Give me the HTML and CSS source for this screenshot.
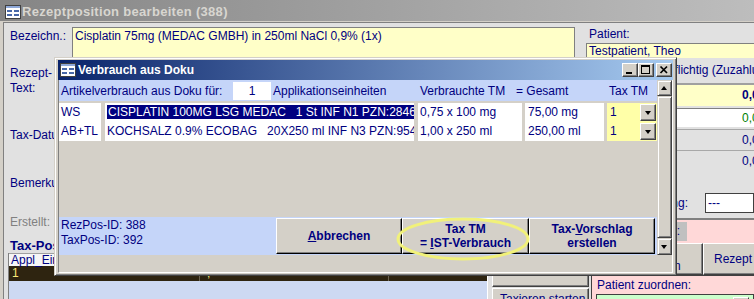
FILE: index.html
```html
<!DOCTYPE html>
<html lang="de">
<head>
    <meta charset="UTF-8">
    <title>Rezeptposition bearbeiten</title>
    <link rel="stylesheet" href="styles.css">
</head>
<body>
<div class="screen">

    <!-- Hauptformular (inaktiv im Hintergrund) -->
    <div class="win">
        <div class="win-title">
            <svg class="form-icon" width="16" height="14" viewBox="0 0 16 14">
                <rect x="0.5" y="0.5" width="15" height="13" fill="#fff" stroke="#404040"/>
                <rect x="1" y="1" width="14" height="2" fill="#8ea8d8"/>
                <rect x="2" y="5" width="5" height="2" fill="#4868a8"/>
                <rect x="9" y="5" width="5" height="2" fill="#4868a8"/>
                <rect x="2" y="9" width="5" height="2" fill="#4868a8"/>
                <rect x="9" y="9" width="5" height="2" fill="#4868a8"/>
            </svg>
            <span>Rezeptposition bearbeiten (388)</span>
        </div>

        <div class="win-body">
            <div class="band-top">
                <div class="lbl bez-lbl">Bezeichn.:</div>
                <div class="field bez-field">Cisplatin 75mg (MEDAC GMBH) in 250ml NaCl 0,9% (1x)</div>
                <div class="patient">
                    <div class="lbl">Patient:</div>
                    <div class="field pat-field">Testpatient, Theo</div>
                </div>
            </div>

            <div class="band-main">
                <div class="main-left">
                    <div class="lbl l-rezept">Rezept-<br>Text:</div>
                    <div class="lbl l-taxdat">Tax-Datum:</div>
                    <div class="lbl l-bemerk">Bemerkung:</div>
                    <div class="lbl l-erstellt">Erstellt:</div>
                    <div class="taxpos-title">Tax-Positionen</div>
                    <div class="tax-grid">
                        <div class="grid-head">Appl_Einheit</div>
                        <div class="grid-row">
                            <span class="gc gc-1">1</span>
                            <span class="gc gc-2">-,-- -</span>
                            <span class="gc gc-3"></span>
                        </div>
                    </div>
                </div>

                <div class="main-right">
                    <div class="side">
                        <div class="zz">zuzahlungspflichtig (Zuzahlung)</div>
                        <div class="sum">0,00</div>
                        <div class="eigen">0,00</div>
                        <div class="amounts">
                            <div class="amt">0,00</div>
                            <div class="amt">0,00</div>
                            <div class="abr">
                                <div class="lbl">Abrechnung:</div>
                                <div class="abr-field">---</div>
                            </div>
                        </div>
                        <div class="status">
                            <div class="status-box">Status:</div>
                        </div>
                        <div class="side-btns">
                            <div class="btn btn-take">Taxierung<br>übernehmen</div>
                            <div class="btn btn-print">Rezept drucken</div>
                        </div>
                    </div>
                    <div class="lower">
                        <div class="btn-col">
                            <div class="btn btn-stub"></div>
                            <div class="btn btn-start">Taxieren starten</div>
                        </div>
                        <div class="assign">
                            <div class="lbl">Patient zuordnen:</div>
                            <div class="assign-field">
                                <span class="mini-btn"></span>
                            </div>
                        </div>
                    </div>
                </div>
            </div>
        </div>
    </div>

    <!-- Dialog Verbrauch aus Doku -->
    <div class="dialog">
        <div class="dlg-title">
            <svg class="form-icon" width="16" height="14" viewBox="0 0 16 14">
                <rect x="0.5" y="0.5" width="15" height="13" fill="#fff" stroke="#404040"/>
                <rect x="1" y="1" width="14" height="2" fill="#8ea8d8"/>
                <rect x="2" y="5" width="5" height="2" fill="#4868a8"/>
                <rect x="9" y="5" width="5" height="2" fill="#4868a8"/>
                <rect x="2" y="9" width="5" height="2" fill="#4868a8"/>
                <rect x="9" y="9" width="5" height="2" fill="#4868a8"/>
            </svg>
            <span class="dlg-caption">Verbrauch aus Doku</span>
            <div class="cap-btns">
                <span class="cbtn">
                    <svg width="14" height="12" viewBox="0 0 14 12"><rect x="3" y="8" width="6" height="2" fill="#000"/></svg>
                </span>
                <span class="cbtn">
                    <svg width="14" height="12" viewBox="0 0 14 12"><rect x="2.5" y="1.5" width="8" height="8" fill="none" stroke="#000"/><rect x="2" y="1" width="9" height="2" fill="#000"/></svg>
                </span>
                <span class="cbtn cbtn-close">
                    <svg width="14" height="12" viewBox="0 0 14 12"><path d="M3.5 2.5 L10 9 M10 2.5 L3.5 9" stroke="#000" stroke-width="1.7"/></svg>
                </span>
            </div>
        </div>

        <div class="dlg-client">
            <div class="dlg-main">
                <div class="dlg-form">
                    <div class="hdr">
                        <span class="h-lbl">Artikelverbrauch aus Doku für:</span>
                        <span class="h-input">1</span>
                        <span class="h-appl">Applikationseinheiten</span>
                        <span class="h-verb">Verbrauchte TM</span>
                        <span class="h-ges">= Gesamt</span>
                        <span>Tax TM</span>
                    </div>

                    <div class="rows">
                        <div class="row">
                            <div class="cell c1">WS</div>
                            <div class="cell c2"><span class="sel">CISPLATIN 100MG LSG MEDAC   1 St INF N1 PZN:2846597</span></div>
                            <div class="cell c3">0,75 x 100 mg</div>
                            <div class="cell c4">75,00 mg</div>
                            <div class="cell c5">1<span class="drop"></span></div>
                        </div>
                        <div class="row">
                            <div class="cell c1">AB+TL</div>
                            <div class="cell c2">KOCHSALZ 0.9% ECOBAG   20X250 ml INF N3 PZN:9544137</div>
                            <div class="cell c3">1,00 x 250 ml</div>
                            <div class="cell c4">250,00 ml</div>
                            <div class="cell c5">1<span class="drop"></span></div>
                        </div>
                    </div>

                    <div class="empty"></div>

                    <div class="footer">
                        <div class="ids">RezPos-ID: 388<br>TaxPos-ID: 392</div>
                        <div class="dbtn dbtn-cancel"><span><u>A</u>bbrechen</span></div>
                        <div class="dbtn dbtn-ist"><span>Tax TM<br>= <u>I</u>ST-Verbrauch</span></div>
                        <div class="dbtn dbtn-vor"><span>Tax-<u>V</u>orschlag<br>erstellen</span></div>
                    </div>
                </div>

                <div class="vscroll">
                    <span class="sbtn sbtn-up"></span>
                    <span class="thumb"></span>
                    <span class="sbtn sbtn-down"></span>
                </div>
            </div>
        </div>
    </div>

    <!-- Markierung -->
    <svg class="mark" width="136" height="46" viewBox="0 0 136 46">
        <ellipse cx="68" cy="23" rx="65" ry="20" fill="none" stroke="#f1f17a" stroke-width="3"/>
    </svg>

</div>
</body>
</html>
```

FILE: styles.css
```css
* {
  box-sizing: border-box;
}

html,
body {
  margin: 0;
  height: 100%;
  overflow: hidden;
}

body {
  font-family: "Liberation Sans", Arial, sans-serif;
  font-size: 12px;
  color: #000080;
  background: #d4d0c8;
}

.screen {
  position: relative;
  width: 754px;
  height: 299px;
  overflow: hidden;
}

.form-icon {
  flex: none;
  display: block;
}

/* ---------- Hintergrundfenster ---------- */

.win {
  height: 100%;
  display: flex;
  flex-direction: column;
  background: #d4d0c8;
}

.win-title {
  height: 21px;
  flex: none;
  display: flex;
  align-items: center;
  gap: 1px;
  padding: 2px 0 0 5px;
  background: linear-gradient(to right, #858585, #bdbdbd);
  color: #d8d6d0;
  font-size: 13px;
  font-weight: bold;
  letter-spacing: 0.3px;
}

.win-body {
  flex: 1;
  min-height: 0;
  display: flex;
  flex-direction: column;
  margin: 1px 0 0 3px;
  border-top: 1px solid #808080;
  border-left: 1px solid #808080;
  background: #e1e1e1;
}

.lbl {
  line-height: 15px;
  white-space: nowrap;
}

.field {
  background: #ffffc8;
  border: 1px solid #808080;
  white-space: nowrap;
  overflow: hidden;
  line-height: 15px;
}

.band-top {
  height: 35px;
  flex: none;
  display: flex;
}

.bez-lbl {
  width: 68px;
  padding: 6px 0 0 6px;
}

.bez-field {
  width: 503px;
  height: 31px;
  margin-top: 4px;
  padding: 1px 2px;
}

.patient {
  flex: 1;
  margin-left: 8px;
}

.patient .lbl {
  padding: 4px 0 0 6px;
}

.pat-field {
  height: 15px;
  margin: 1px 0 0 3px;
  padding: 0 2px;
  border-right: 0;
  border-bottom: 0;
  line-height: 14px;
}

.band-main {
  flex: 1;
  min-height: 0;
  display: flex;
}

.main-left {
  width: 483px;
  flex: none;
  display: flex;
  flex-direction: column;
  padding-left: 6px;
}

.l-rezept { margin-top: 8px; }
.l-taxdat { margin-top: 32px; }
.l-bemerk { margin-top: 33px; }
.l-erstellt { margin-top: 24px; color: #808080; }

.taxpos-title {
  margin-top: 8px;
  font-size: 13px;
  font-weight: bold;
  line-height: 15px;
  white-space: nowrap;
}

.tax-grid {
  flex: 1;
  margin-left: -2px;
  background: #cdd9f2;
  border-left: 1px solid #808080;
}

.grid-head {
  height: 13px;
  padding-left: 2px;
  background: #f6f6f6;
  border-top: 1px solid #a0a0a0;
  line-height: 12px;
}

.grid-row {
  height: 15px;
  display: flex;
  background: #2e2410;
  color: #f8e878;
  line-height: 15px;
}

.gc {
  padding-left: 3px;
}

.gc-1 { width: 190px; }
.gc-2 { width: 189px; border-left: 1px solid #6a6250; }
.gc-3 { flex: 1; border-left: 1px solid #6a6250; }

.main-right {
  flex: 1;
  display: flex;
  flex-direction: column;
  overflow: hidden;
}

.side {
  height: 218px;
  flex: none;
  display: flex;
  flex-direction: column;
  padding-left: 104px;
}

.zz {
  height: 25px;
  line-height: 25px;
  padding-left: 16px;
  white-space: nowrap;
}

.sum {
  height: 23px;
  border-top: 2px solid #a0a0a0;
  background: #ffffc8;
  font-weight: bold;
  line-height: 21px;
  padding-left: 151px;
}

.eigen {
  height: 19px;
  margin-top: 2px;
  background: #fff;
  border-top: 1px solid #808080;
  color: #008000;
  line-height: 18px;
  padding-left: 151px;
}

.amounts {
  height: 91px;
  display: flex;
  flex-direction: column;
  padding-top: 2px;
}

.amt {
  height: 21px;
  border-top: 1px solid #a8a8a8;
  line-height: 20px;
  padding-left: 151px;
}

.abr {
  display: flex;
  height: 20px;
  margin-top: 22px;
}

.abr .lbl {
  width: 97px;
  text-align: right;
  line-height: 20px;
}

.abr-field {
  flex: 1;
  margin-left: 17px;
  background: #fff;
  border: 1px solid #404040;
  line-height: 18px;
  padding-left: 2px;
}

.status {
  height: 25px;
  padding-top: 2px;
  border-top: 2px solid #808080;
  background: #ffd8d8;
}

.status-box {
  width: 87px;
  height: 19px;
  margin-left: 9px;
  padding-right: 7px;
  background: #c0c0c0;
  text-align: right;
  line-height: 18px;
}

.btn {
  background: #d4d0c8;
  border: 1px solid;
  border-color: #fff #404040 #404040 #fff;
  box-shadow: inset -1px -1px #808080;
  line-height: 14px;
  white-space: nowrap;
  overflow: hidden;
}

.side-btns {
  height: 33px;
  display: flex;
  border-bottom: 1px solid #404040;
}

.btn-take {
  width: 112px;
  flex: none;
  display: flex;
  align-items: center;
  justify-content: center;
  text-align: center;
}

.btn-print {
  width: 100px;
  flex: none;
  padding-left: 10px;
  line-height: 30px;
}

.lower {
  flex: 1;
  display: flex;
}

.btn-col {
  width: 104px;
  flex: none;
  padding: 0 2px 0 4px;
  border-left: 1px solid #fff;
}

.btn-stub {
  height: 11px;
  border-top: 0;
}

.btn-start {
  height: 22px;
  margin-top: 1px;
  padding: 3px 0 0 7px;
}

.assign {
  flex: 1;
  padding: 2px 0 0 5px;
  background: #ffd8d8;
  border-left: 1px solid #404040;
}

.assign-field {
  height: 20px;
  margin: 1px 0 0 -1px;
  display: flex;
  justify-content: flex-end;
  padding: 2px 4px 0 0;
  background: #ccffcc;
  border: 1px solid #404040;
}

.mini-btn {
  width: 16px;
  height: 16px;
  background: #d4d0c8;
  border: 1px solid;
  border-color: #fff #404040 #404040 #fff;
}

/* ---------- Dialog ---------- */

.dialog {
  position: absolute;
  left: 54px;
  top: 57px;
  width: 623px;
  height: 219px;
  display: flex;
  flex-direction: column;
  padding: 2px 3px;
  background: #d4d0c8;
  border: 1px solid;
  border-color: #d4d0c8 #404040 #404040 #d4d0c8;
  box-shadow: inset 1px 1px #fff, inset -1px -1px #808080;
}

.dlg-title {
  height: 20px;
  flex: none;
  display: flex;
  align-items: center;
  gap: 2px;
  padding: 0 1px 0 2px;
  background: linear-gradient(to right, #0a246a, #a6caf0);
  color: #fff;
  font-weight: bold;
}

.dlg-caption {
  flex: 1;
}

.cap-btns {
  display: flex;
}

.cbtn {
  width: 16px;
  height: 14px;
  display: flex;
  align-items: center;
  justify-content: center;
  background: #d4d0c8;
  border: 1px solid;
  border-color: #fff #404040 #404040 #fff;
  box-shadow: inset -1px -1px #808080;
}

.cbtn-close {
  margin-left: 2px;
}

.dlg-client {
  flex: 1;
  display: flex;
  flex-direction: column;
  border-left: 1px solid #808080;
  border-right: 1px solid #fff;
  border-bottom: 1px solid #fff;
}

.dlg-main {
  height: 175px;
  display: flex;
}

.dlg-form {
  width: 598px;
  display: flex;
  flex-direction: column;
}

.hdr {
  height: 21px;
  display: flex;
  align-items: center;
  background: #c5d5f9;
  white-space: nowrap;
}

.h-lbl { width: 174px; padding-left: 2px; }

.h-input {
  width: 38px;
  height: 18px;
  background: #fff;
  text-align: center;
  line-height: 18px;
}

.h-appl { width: 147px; margin-left: 2px; }
.h-verb { width: 96px; }
.h-ges { width: 93px; }

.rows {
  padding-top: 2px;
}

.row {
  height: 19px;
  display: flex;
}

.cell {
  background: #fff;
  line-height: 19px;
  white-space: pre;
  overflow: hidden;
}

.c1 { width: 42px; margin-right: 4px; padding-left: 2px; }
.c2 { width: 309px; margin-right: 4px; padding-left: 2px; }
.c3 { width: 104px; margin-right: 3px; padding-left: 2px; }
.c4 { width: 79px; margin-right: 3px; padding-left: 3px; }

.c5 {
  width: 50px;
  display: flex;
  align-items: center;
  justify-content: space-between;
  padding: 0 1px 0 3px;
  background: #ffffa8;
}

.sel {
  padding-left: 1px;
  padding-right: 40px;
  background: #000080;
  color: #fff;
}

.drop {
  width: 16px;
  height: 17px;
  background: #d4d0c8;
  border: 1px solid;
  border-color: #fff #404040 #404040 #fff;
  box-shadow: inset -1px -1px #808080;
  position: relative;
}

.drop::after,
.sbtn::after {
  content: "";
  position: absolute;
  left: 4px;
  top: 6px;
  border-left: 3.5px solid transparent;
  border-right: 3.5px solid transparent;
  border-top: 4px solid #000;
}

.empty {
  flex: 1;
}

.footer {
  height: 38px;
  display: flex;
  padding: 1px 0;
  background: #c5d5f9;
}

.ids {
  width: 217px;
  padding-left: 2px;
  line-height: 15px;
}

.dbtn {
  height: 36px;
  display: flex;
  align-items: center;
  justify-content: center;
  text-align: center;
  background: #d4d0c8;
  border: 1px solid;
  border-color: #fff #000 #000 #fff;
  box-shadow: inset -1px -1px #808080;
  font-weight: bold;
  line-height: 14px;
}

.dbtn-cancel { width: 126px; }
.dbtn-ist { width: 127px; }
.dbtn-vor { width: 126px; }

.vscroll {
  width: 15px;
  display: flex;
  flex-direction: column;
}

.sbtn {
  position: relative;
  height: 16px;
  background: #d4d0c8;
  border: 1px solid;
  border-color: #d4d0c8 #404040 #404040 #d4d0c8;
  box-shadow: inset 1px 1px #fff, inset -1px -1px #808080;
}

.sbtn-up::after {
  border-top: 0;
  border-bottom: 4px solid #000;
  top: 5px;
  left: 3px;
}

.sbtn-down {
  height: 17px;
}

.sbtn-down::after {
  left: 3px;
}

.thumb {
  flex: 1;
  background: #d4d0c8;
  border: 1px solid;
  border-color: #d4d0c8 #404040 #404040 #d4d0c8;
  box-shadow: inset 1px 1px #fff, inset -1px -1px #808080;
}

.mark {
  position: absolute;
  left: 395px;
  top: 216px;
}
```
